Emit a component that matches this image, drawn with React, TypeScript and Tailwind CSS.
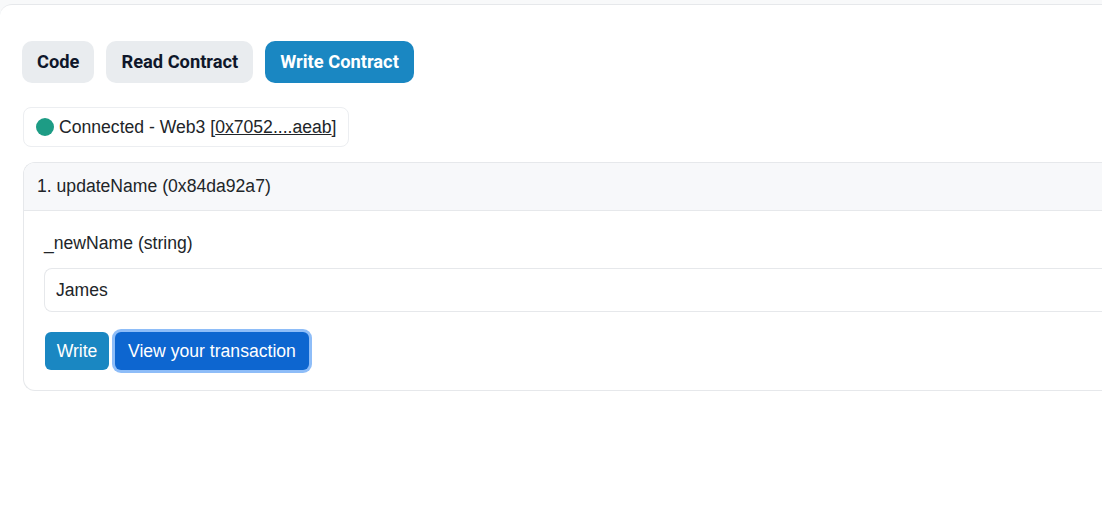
import { useState } from "react";

export default function App() {
    const [name, setName] = useState<string>("James");
    const tabs = ["Code", "Read Contract", "Write Contract"];
    const active = "Write Contract";

    return (
        <div className="min-h-screen bg-[#f8f9fa] pt-[4px]" style={{ fontFamily: "'Liberation Sans', Arial, sans-serif" }}>
            <div className="min-h-[504px] bg-white border-t border-[#e6e8eb] rounded-tl-xl pt-[36px] pl-[22px]">
                <div className="flex gap-3" style={{ fontFamily: "Roboto, sans-serif" }}>
                    {tabs.map((t) => (
                        <button
                            key={t}
                            className={`h-[42px] px-[15px] rounded-[10px] text-[18.3px] font-bold ${t === active ? "bg-[#1a87c2] text-white" : "bg-[#e9ecef] text-[#0f172a]"}`}
                        >
                            {t}
                        </button>
                    ))}
                </div>

                <div className="mt-[24px] ml-px inline-flex items-center h-[40px] px-3 border border-[#eceef1] rounded-lg text-[17.6px] text-[#212529]">
                    <span className="w-[18px] h-[18px] rounded-full bg-[#1d9c85] mr-[5px]" />
                    Connected - Web3 [<span className="underline">0x7052....aeab</span>]
                </div>

                <div className="mt-[15px] ml-px border border-r-0 border-[#e6e8eb] rounded-l-xl overflow-hidden text-[17.6px] text-[#212529]">
                    <div className="h-[48px] flex items-center pl-[13px] bg-[#f7f8fa] border-b border-[#e6e8eb]">
                        1. updateName (0x84da92a7)
                    </div>
                    <div className="pt-[20px] pl-[20px] pb-[20px]">
                        <div className="leading-[25px]">_newName (string)</div>
                        <input
                            value={name}
                            onChange={(e) => setName(e.target.value)}
                            className="mt-[12px] w-full h-[44px] pl-[11px] border border-r-0 border-[#e6e8eb] rounded-l-lg outline-none text-[17.6px] text-[#212529]"
                        />
                        <div className="mt-[20px] flex items-center gap-[3px]">
                            <button className="ml-px h-[38px] w-[64px] rounded-md bg-[#1a87c2] text-white text-[17.6px]">
                                Write
                            </button>
                            <button className="h-[38px] px-[13px] rounded-md bg-[#0d66d0] text-white text-[17.6px] ring-[3px] ring-[#8ebdf8] ml-[3px]">
                                View your transaction
                            </button>
                        </div>
                    </div>
                </div>
            </div>
        </div>
    );
}
